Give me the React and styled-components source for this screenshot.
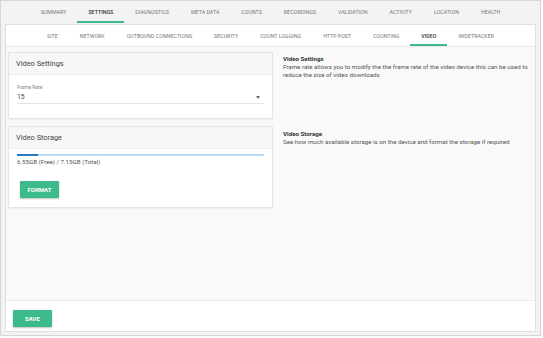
import React from "react";
import styled, { createGlobalStyle } from "styled-components";

const Global = createGlobalStyle`
  html, body { margin: 0; padding: 0; background: #ffffff; }
  body { font-family: Roboto, "Liberation Sans", sans-serif; }
  * { box-sizing: border-box; }
`;

const Frame = styled.div`
  width: 541px;
  height: 336px;
  border: 1px solid #d6d6d6;
  background: #f3f3f3;
  display: flex;
  flex-direction: column;
`;

const TabBar = styled.div`
  display: flex;
  justify-content: center;
  height: ${(p) => p.$h}px;
  flex-shrink: 0;
  border-bottom: ${(p) => (p.$line ? "1px solid #e8e8e8" : "none")};
`;

const Tab = styled.div`
  padding: 2px 11px 0 11px;
  display: flex;
  align-items: center;
  justify-content: center;
  font-size: 5.3px;
  text-transform: uppercase;
  color: ${(p) => (p.$active ? "#333" : "#777")};
  font-weight: ${(p) => (p.$active ? 500 : 400)};
  border-bottom: 2px solid ${(p) => (p.$active ? "#3dba89" : "transparent")};
  white-space: nowrap;
`;

const Panel = styled.div`
  margin: 1px 4px 3px 4px;
  flex: 1;
  background: #ffffff;
  border: 1px solid #e0e0e0;
  display: flex;
  flex-direction: column;
`;

const Content = styled.div`
  flex: 1;
  background: #f9f9f9;
  display: grid;
  grid-template-columns: 265px 1fr;
  column-gap: 10px;
  align-content: start;
  padding: 5px 2px 0 2px;
  border-bottom: 1px solid #ececec;
`;

const Cards = styled.div`
  display: flex;
  flex-direction: column;
  gap: 7px;
`;

const Card = styled.div`
  background: #fff;
  border: 1px solid #e4e4e4;
  box-shadow: 0 1px 2px rgba(0, 0, 0, 0.06);
  border-radius: 1px;
`;

const CardHeader = styled.div`
  height: 22px;
  background: #f7f7f7;
  border-bottom: 1px solid #ededed;
  display: flex;
  align-items: center;
  padding-left: 7px;
  font-size: 7.4px;
  color: #444;
`;

const CardBody = styled.div`
  padding: ${(p) => p.$pad};
`;

const FieldLabel = styled.div`
  font-size: 5px;
  color: #888;
  margin-bottom: 1px;
`;

const SelectRow = styled.div`
  display: flex;
  justify-content: space-between;
  align-items: center;
  border-bottom: 1px solid #e2e2e2;
  height: 13px;
  font-size: 6.8px;
  color: #444;
  padding-right: 4px;
`;

const Caret = styled.span`
  width: 0;
  height: 0;
  border-left: 2.5px solid transparent;
  border-right: 2.5px solid transparent;
  border-top: 3px solid #666;
`;

const Progress = styled.div`
  height: 2px;
  background: #b8daf6;
`;

const ProgressFill = styled.div`
  height: 100%;
  background: #2979c9;
`;

const StorageText = styled.div`
  font-size: 6.2px;
  color: #555;
  margin-top: 2px;
`;

const ButtonRow = styled.div`
  margin-top: ${(p) => p.$mt}px;
  padding-left: ${(p) => p.$pl}px;
`;

const Button = styled.button`
  border: none;
  background: #3dba89;
  color: #fff;
  font-family: Roboto, "Liberation Sans", sans-serif;
  font-weight: 700;
  font-size: 6px;
  height: 17px;
  width: ${(p) => p.$w}px;
  border-radius: 1px;
  box-shadow: 0 1px 2px rgba(0, 0, 0, 0.25);
  text-transform: uppercase;
  padding: 0;
`;

const Help = styled.div`
  display: flex;
  flex-direction: column;
`;

const HelpBlock = styled.div`
  height: ${(p) => p.$h}px;
  padding-top: 3px;
  font-size: 6.2px;
  line-height: 8px;
  color: #555;
`;

const HelpTitle = styled.div`
  font-weight: 700;
  color: #333;
`;

const Footer = styled.div`
  height: 30px;
  display: flex;
  align-items: center;
  padding-left: 7px;
  flex-shrink: 0;
`;

const topTabs = ["Summary", "Settings", "Diagnostics", "Meta Data", "Counts", "Recordings", "Validation", "Activity", "Location", "Health"];
const subTabs = ["Site", "Network", "Outbound Connections", "Security", "Count Logging", "HTTP Post", "Counting", "Video", "Widetracker"];

export default function App() {
  return (
    <>
      <Global />
      <Frame>
        <TabBar $h={22}>
          {topTabs.map((t) => (
            <Tab key={t} $active={t === "Settings"}>{t}</Tab>
          ))}
        </TabBar>
        <Panel>
          <TabBar $h={22} $line>
            {subTabs.map((t) => (
              <Tab key={t} $active={t === "Video"}>{t}</Tab>
            ))}
          </TabBar>
          <Content>
            <Cards>
              <Card>
                <CardHeader>Video Settings</CardHeader>
                <CardBody $pad="9px 8px 14px 8px">
                  <FieldLabel>Frame Rate</FieldLabel>
                  <SelectRow>
                    <span>15</span>
                    <Caret />
                  </SelectRow>
                </CardBody>
              </Card>
              <Card>
                <CardHeader>Video Storage</CardHeader>
                <CardBody $pad="5px 8px 9px 8px">
                  <Progress>
                    <ProgressFill style={{ width: `${((7.15 - 6.55) / 7.15) * 100}%` }} />
                  </Progress>
                  <StorageText>6.55GB (Free) / 7.15GB (Total)</StorageText>
                  <ButtonRow $mt={11} $pl={3}>
                    <Button $w={39}>Format</Button>
                  </ButtonRow>
                </CardBody>
              </Card>
            </Cards>
            <Help>
              <HelpBlock $h={75}>
                <HelpTitle>Video Settings</HelpTitle>
                Frame rate allows you to modify the the frame rate of the video device this can be used to reduce the size of video downloads
              </HelpBlock>
              <HelpBlock $h={40}>
                <HelpTitle>Video Storage</HelpTitle>
                See how much available storage is on the device and format the storage if required
              </HelpBlock>
            </Help>
          </Content>
          <Footer>
            <ButtonRow $mt={0} $pl={0}>
              <Button $w={39}>Save</Button>
            </ButtonRow>
          </Footer>
        </Panel>
      </Frame>
    </>
  );
}
